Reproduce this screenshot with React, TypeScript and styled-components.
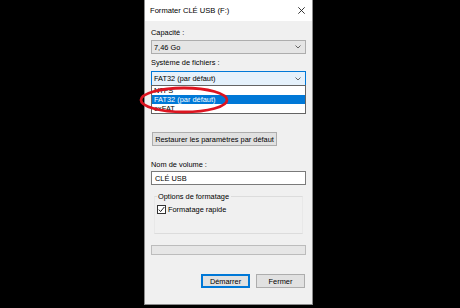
import React from "react";
import styled, {createGlobalStyle} from "styled-components";

const GlobalStyle = createGlobalStyle`
  html, body {
    margin: 0;
    padding: 0;
    background: #000;
  }
  body {
    font-family: "Liberation Sans", Arial, sans-serif;
    font-size: 7.4px;
    color: #000;
  }
`;

const Stage = styled.div`
  width: 460px;
  height: 308px;
  background: #000;
  overflow: hidden;
`;

const Window = styled.div`
  position: relative;
  margin-left: 144px;
  width: 169px;
  height: 305px;
  box-sizing: border-box;
  border: 1px solid #8c8c8c;
  border-top: none;
  background: #f0f0f0;
  display: flex;
  flex-direction: column;
`;

const TitleBar = styled.div`
  height: 21px;
  flex: none;
  background: #fff;
  display: flex;
  align-items: center;
  padding: 0 7px 0 5px;
  font-size: 7.6px;
`;

const CloseIcon = styled.svg`
  margin-left: auto;
  width: 7px;
  height: 7px;
`;

const Body = styled.div`
  display: flex;
  flex-direction: column;
  padding: 7px 6px 0 6px;
  flex: 1;
`;

const Label = styled.div<{$top?: number}>`
  height: 10px;
  line-height: 10px;
  margin-top: ${p => p.$top ?? 0}px;
  white-space: nowrap;
`;

const Combo = styled.div<{$focused?: boolean; $top?: number}>`
  height: ${p => (p.$focused ? 15 : 14)}px;
  margin-top: ${p => p.$top ?? 0}px;
  box-sizing: border-box;
  border: 1px solid ${p => (p.$focused ? "#0078d7" : "#adadad")};
  background: ${p => (p.$focused ? "#e5f1fb" : "#e5e5e5")};
  display: flex;
  align-items: center;
  justify-content: space-between;
  padding: 0 4px 0 2px;
  white-space: nowrap;
`;

const Chevron = styled.svg`
  width: 6px;
  height: 4px;
`;

const ComboField = styled.div`
  position: relative;
`;

const DropList = styled.div`
  position: absolute;
  left: 0;
  right: 0;
  top: calc(100% - 1px);
  box-sizing: border-box;
  border: 1px solid #646464;
  background: #fff;
  z-index: 2;
`;

const DropItem = styled.div<{$selected?: boolean}>`
  height: 9px;
  line-height: 9px;
  padding-left: 2px;
  background: ${p => (p.$selected ? "#0078d7" : "transparent")};
  color: ${p => (p.$selected ? "#fff" : "#000")};
  white-space: nowrap;
`;

const Button = styled.div<{$default?: boolean; $width: number}>`
  width: ${p => p.$width}px;
  height: 14px;
  box-sizing: border-box;
  border: 1px solid ${p => (p.$default ? "#0078d7" : "#adadad")};
  box-shadow: ${p => (p.$default ? "inset 0 0 0 1px #0078d7" : "none")};
  background: #e1e1e1;
  display: flex;
  align-items: center;
  justify-content: center;
  white-space: nowrap;
`;

const RestoreRow = styled.div`
  margin-top: 46px;
  padding-left: 1px;
  display: flex;
`;

const TextBox = styled.div`
  margin-top: 1px;
  height: 14px;
  box-sizing: border-box;
  border: 1px solid #7a7a7a;
  background: #fff;
  display: flex;
  align-items: center;
  padding-left: 3px;
`;

const Group = styled.div`
  position: relative;
  margin: 11px 3px 0 3px;
  height: 38px;
  box-sizing: border-box;
  border: 1px solid #dcdcdc;
  border-left-color: #e8e8e8;
  border-right-color: #e8e8e8;
  padding: 8px 0 0 2px;
`;

const GroupTitle = styled.div`
  position: absolute;
  top: -5px;
  left: 2px;
  line-height: 10px;
  padding: 0 2px 0 1px;
  background: #f0f0f0;
`;

const CheckRow = styled.div`
  display: flex;
  align-items: center;
  gap: 2px;
`;

const CheckBox = styled.div`
  width: 9px;
  height: 9px;
  box-sizing: border-box;
  border: 1px solid #333;
  background: #fff;
  display: flex;
  align-items: center;
  justify-content: center;
`;

const Progress = styled.div`
  margin-top: 11px;
  height: 10px;
  box-sizing: border-box;
  border: 1px solid #bcbcbc;
  background: #e6e6e6;
`;

const ButtonRow = styled.div`
  margin-top: 19px;
  display: flex;
  justify-content: flex-end;
  gap: 6px;
  padding-right: 1px;
`;

const Annotation = styled.svg`
  position: absolute;
  left: -6px;
  top: 86px;
  width: 92px;
  height: 30px;
  z-index: 3;
  pointer-events: none;
`;

function ChevronDown() {
    return (
        <Chevron viewBox="0 0 6 4">
            <polyline points="0.5,0.5 3,3 5.5,0.5" fill="none" stroke="#555" strokeWidth="0.9"/>
        </Chevron>
    );
}

export default function App() {
    return (
        <Stage>
            <GlobalStyle/>
            <Window>
                <TitleBar>
                    <span>Formater CLÉ USB (F:)</span>
                    <CloseIcon viewBox="0 0 7 7">
                        <line x1="0.3" y1="0.3" x2="6.7" y2="6.7" stroke="#222" strokeWidth="0.9"/>
                        <line x1="6.7" y1="0.3" x2="0.3" y2="6.7" stroke="#222" strokeWidth="0.9"/>
                    </CloseIcon>
                </TitleBar>
                <Body>
                    <Label>Capacité :</Label>
                    <Combo $top={2}>
                        <span>7,46 Go</span>
                        <ChevronDown/>
                    </Combo>
                    <Label $top={4}>Système de fichiers :</Label>
                    <ComboField>
                        <Combo $focused $top={3}>
                            <span>FAT32 (par défaut)</span>
                            <ChevronDown/>
                        </Combo>
                        <DropList>
                            <DropItem>NTFS</DropItem>
                            <DropItem $selected>FAT32 (par défaut)</DropItem>
                            <DropItem>exFAT</DropItem>
                        </DropList>
                    </ComboField>
                    <RestoreRow>
                        <Button $width={125}>Restaurer les paramètres par défaut</Button>
                    </RestoreRow>
                    <Label $top={14}>Nom de volume :</Label>
                    <TextBox>CLÉ USB</TextBox>
                    <Group>
                        <GroupTitle>Options de formatage</GroupTitle>
                        <CheckRow>
                            <CheckBox>
                                <svg width="7" height="7" viewBox="0 0 7 7">
                                    <polyline points="0.8,3.6 2.6,5.6 6.3,1" fill="none" stroke="#222" strokeWidth="1"/>
                                </svg>
                            </CheckBox>
                            <span>Formatage rapide</span>
                        </CheckRow>
                    </Group>
                    <Progress/>
                    <ButtonRow>
                        <Button $default $width={49}>Démarrer</Button>
                        <Button $width={49}>Fermer</Button>
                    </ButtonRow>
                </Body>
                <Annotation viewBox="0 0 92 30">
                    <ellipse cx="45" cy="14" rx="43" ry="12" fill="none" stroke="#dc1420" strokeWidth="2.8"/>
                </Annotation>
            </Window>
        </Stage>
    );
}
